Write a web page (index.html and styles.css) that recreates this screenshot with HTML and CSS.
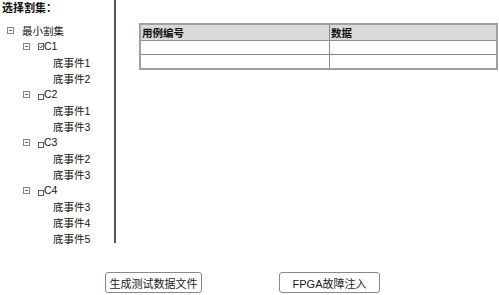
FILE: index.html
```html
<!DOCTYPE html>
<html lang="zh-CN">
<head>
    <meta charset="UTF-8">
    <title>割集选择</title>
    <link rel="stylesheet" href="styles.css">
</head>
<body>
    <div class="main">
        <!-- 左侧：割集树 -->
        <div class="tree-panel">
            <div class="title">选择割集：</div>
            <ul class="tree">
                <li class="node lv0"><span class="exp"></span>最小割集</li>
                <li class="node lv1"><span class="exp"></span><svg class="chk-on" width="6" height="7" viewBox="0 0 6 7"><rect x="0.5" y="0.5" width="5" height="6" fill="none" stroke="#666"/><path d="M1.5 3.5 L2.7 5 L4.5 2" fill="none" stroke="#555"/></svg>C1</li>
                <li class="node lv2">底事件1</li>
                <li class="node lv2">底事件2</li>
                <li class="node lv1"><span class="exp"></span><span class="chk"></span>C2</li>
                <li class="node lv2">底事件1</li>
                <li class="node lv2">底事件3</li>
                <li class="node lv1"><span class="exp"></span><span class="chk"></span>C3</li>
                <li class="node lv2">底事件2</li>
                <li class="node lv2">底事件3</li>
                <li class="node lv1"><span class="exp"></span><span class="chk"></span>C4</li>
                <li class="node lv2">底事件3</li>
                <li class="node lv2">底事件4</li>
                <li class="node lv2">底事件5</li>
            </ul>
        </div>

        <!-- 右侧：数据表 -->
        <div class="data-panel">
            <table class="grid">
                <tr><th class="col-id">用例编号</th><th>数据</th></tr>
                <tr><td></td><td></td></tr>
                <tr><td></td><td></td></tr>
            </table>
        </div>
    </div>

    <div class="actions">
        <button class="btn btn-gen">生成测试数据文件</button>
        <button class="btn btn-fpga">FPGA故障注入</button>
    </div>
</body>
</html>
```

FILE: styles.css
```css
body {
    margin: 0;
    font-family: "Liberation Sans", "Noto Sans CJK SC", sans-serif;
    font-size: 10.5px;
    color: #151515;
    background: #fff;
}
.main {
    display: flex;
    height: 243px;
}
.tree-panel {
    width: 114px;
    border-right: 2px solid #555;
}
.title {
    font-weight: bold;
    font-size: 11px;
    line-height: 16px;
    padding-left: 2px;
    margin-bottom: 6px;
    color: #111;
}
.tree {
    list-style: none;
    margin: 0;
    padding: 0;
}
.node {
    display: flex;
    align-items: center;
    height: 16px;
    white-space: nowrap;
}
.lv0 { padding-left: 7px; }
.lv1 { padding-left: 23px; }
.lv2 { padding-left: 53px; }

.exp {
    position: relative;
    width: 5px;
    height: 5px;
    border: 1px solid #888;
    margin-right: 8px;
}
.exp::after {
    content: "";
    position: absolute;
    left: 1px;
    right: 1px;
    top: 2px;
    height: 1px;
    background: #666;
}
.chk {
    width: 4px;
    height: 4px;
    border: 1px solid #555;
    margin-top: 5px;
}
.chk-on {
    display: block;
}

.data-panel {
    flex: 1;
    padding: 23px 0 0 23px;
}
.grid {
    width: 359px;
    border-collapse: collapse;
    border: 2px solid #a0a0a0;
}
.grid th,
.grid td {
    border: 1px solid #8c8c8c;
    padding: 0 1px;
    text-align: left;
}
.grid th {
    height: 15px;
    background: #d9d9d9;
    font-weight: bold;
    font-size: 10.5px;
    color: #111;
}
.grid td {
    height: 13px;
}
.grid .col-id {
    width: 186px;
}

.actions {
    display: flex;
    gap: 77px;
    padding: 29px 0 0 105px;
}
.btn {
    height: 21px;
    border: 1px solid #888;
    border-radius: 3px;
    background: #fff;
    font-family: inherit;
    font-size: 11px;
    color: #1a1a1a;
    padding: 0;
}
.btn-gen { width: 97px; }
.btn-fpga { width: 101px; }
```
